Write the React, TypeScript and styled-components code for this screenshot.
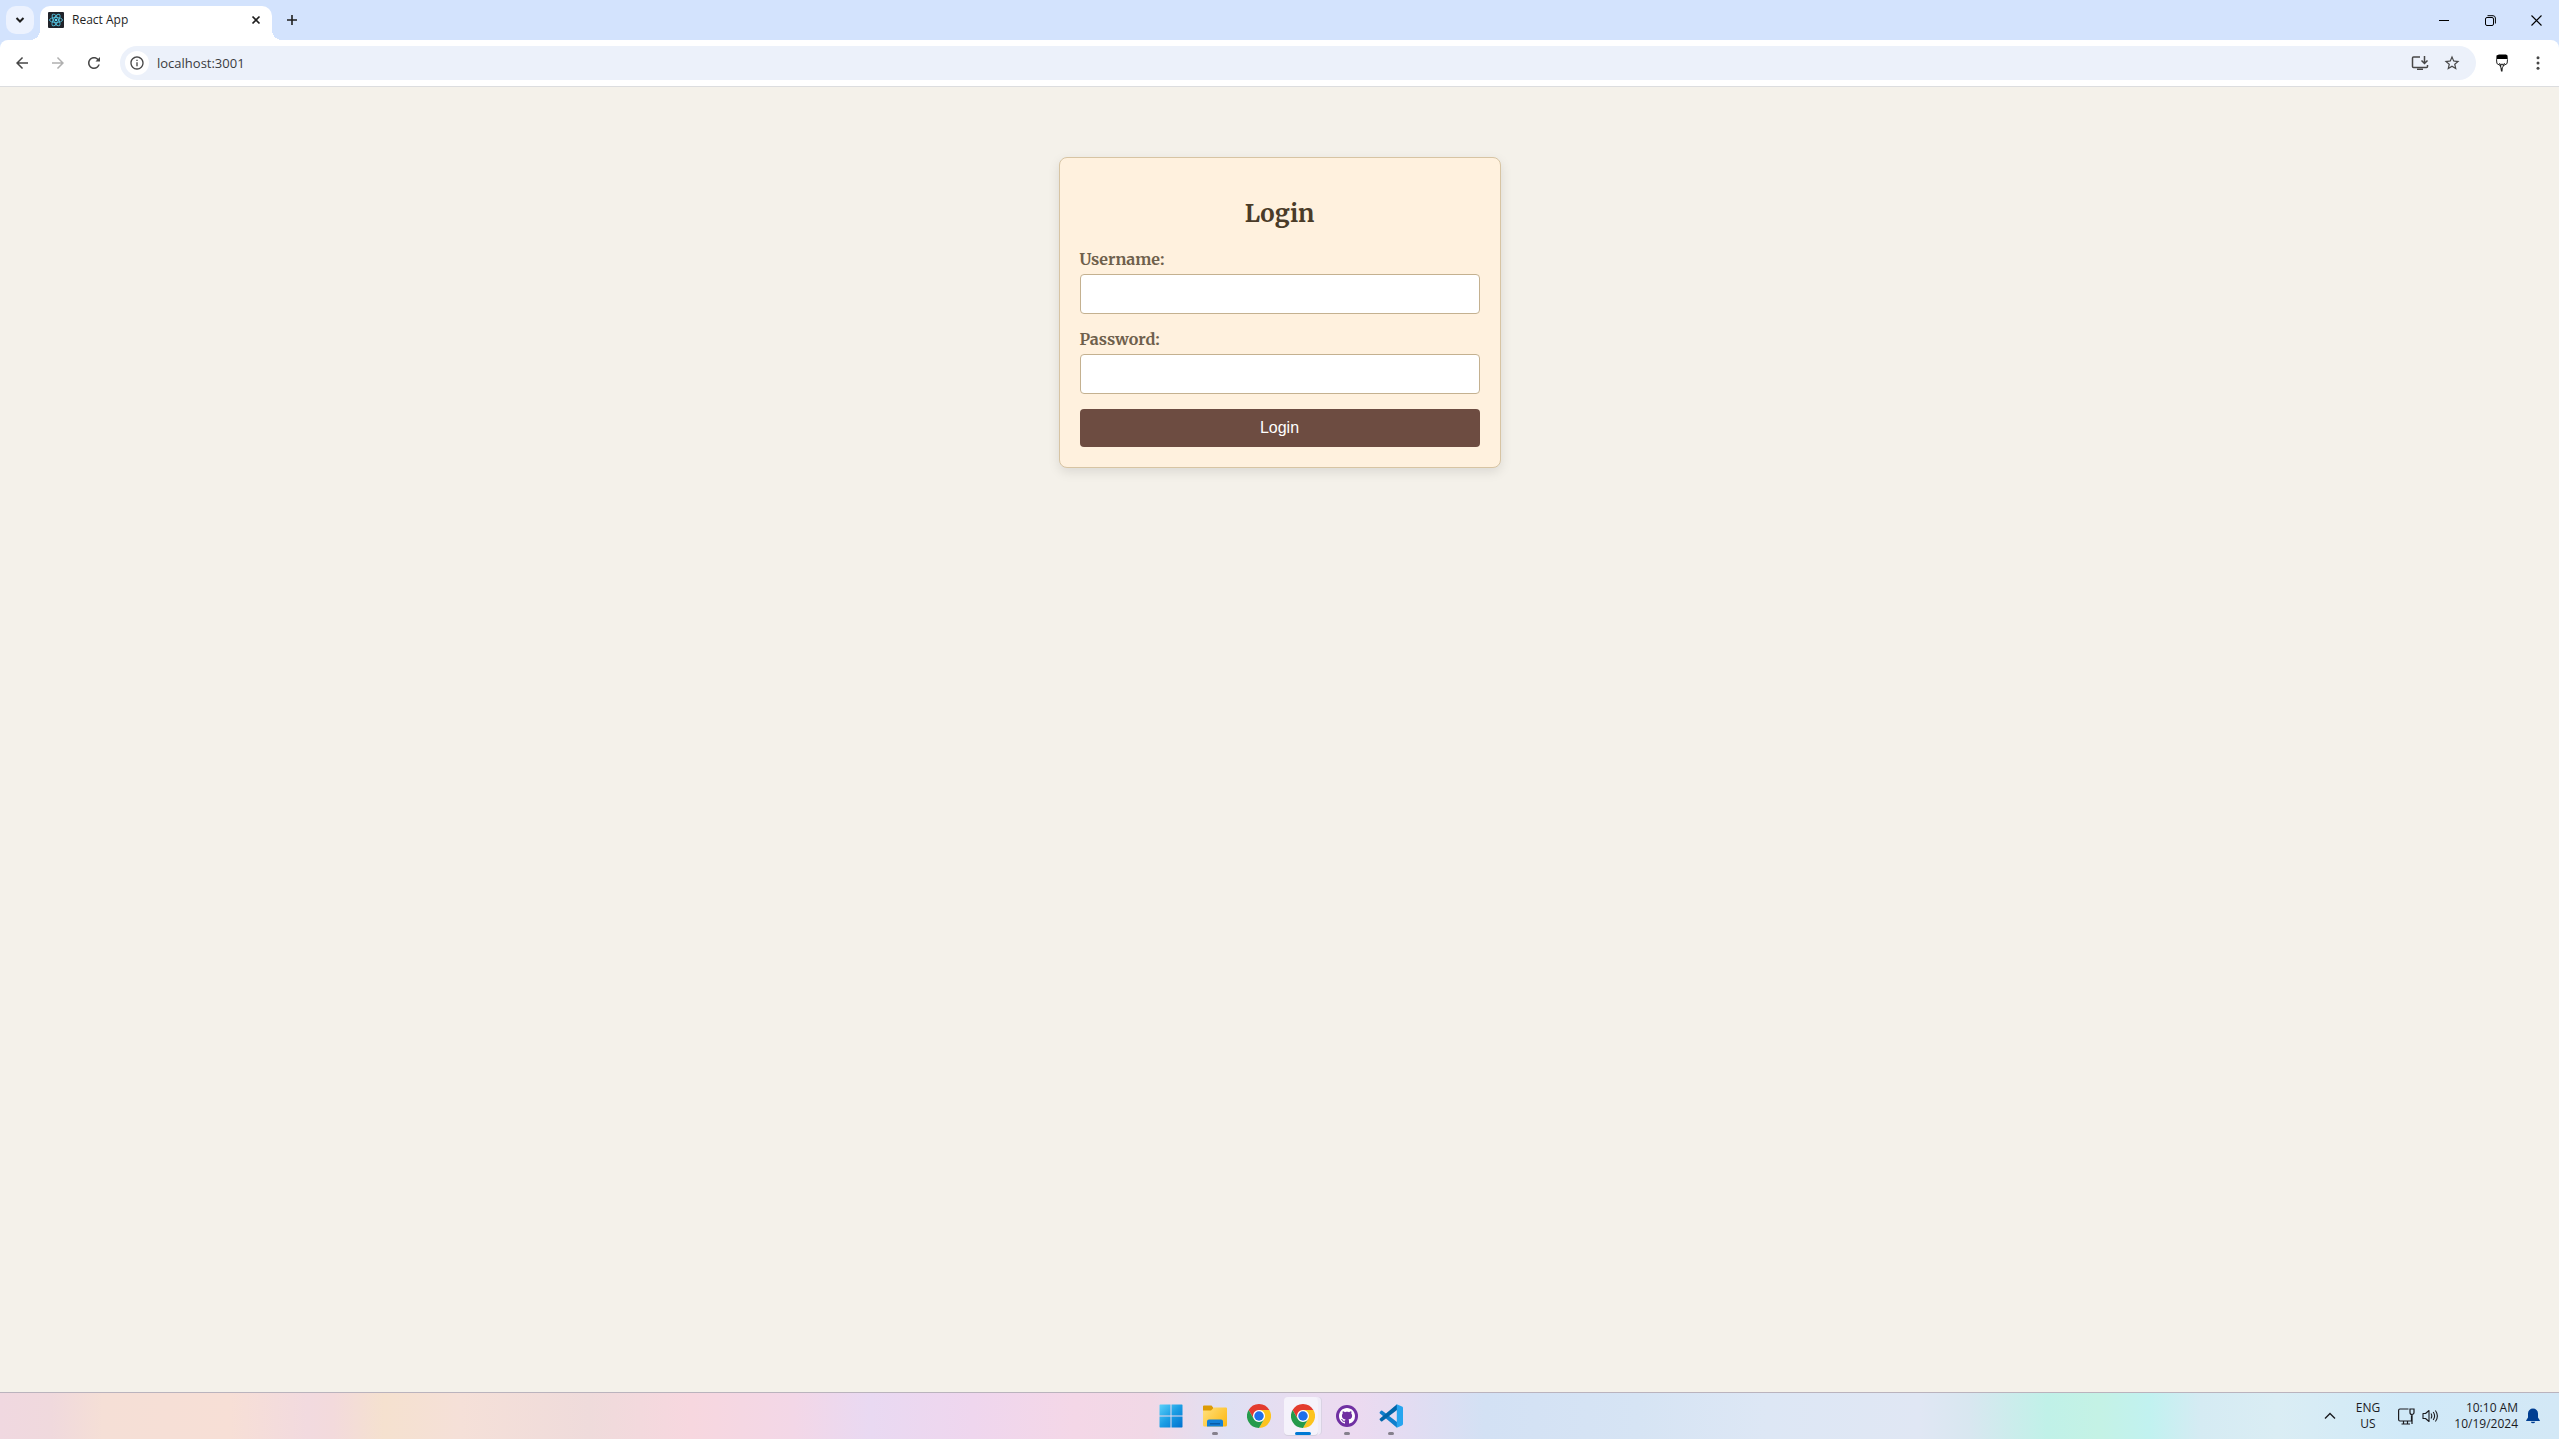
import React from "react";
import styled, { createGlobalStyle, css } from "styled-components";

const GlobalStyle = createGlobalStyle`
  *, *::before, *::after { box-sizing: border-box; }
  body { margin: 0; background: #f4f1ea; }
  button { margin: 0; padding: 0; border: 0; background: none; color: inherit; font: inherit; }
  svg { display: block; }
`;

const uiFont = `"Segoe UI", "Open Sans", "Noto Sans", sans-serif`;
const bookFont = `Merriweather, "DejaVu Serif Condensed", "DejaVu Serif", serif`;

const Screen = styled.div`
  display: flex;
  flex-direction: column;
  min-height: 100vh;
  font-family: ${uiFont};
  color: #1f1f1f;
`;

/* ---------- browser chrome ---------- */

const TabStrip = styled.header`
  display: flex;
  align-items: center;
  height: 40px;
  padding-left: 6px;
  background: #d3e3fd;
`;

const TabSearch = styled.button`
  display: grid;
  place-items: center;
  width: 28px;
  height: 28px;
  border-radius: 10px;
  background: #ecf2fe;
`;

const Tab = styled.div`
  position: relative;
  display: flex;
  align-items: center;
  align-self: flex-end;
  width: 232px;
  height: 34px;
  margin-left: 6px;
  padding: 0 8px 6px;
  border-radius: 10px 10px 0 0;
  background: #fff;
  font-size: 12px;
  line-height: 16px;

  &::before,
  &::after {
    content: "";
    position: absolute;
    bottom: 0;
    width: 10px;
    height: 10px;
  }
  &::before {
    right: 100%;
    background: radial-gradient(circle at 0 0, transparent 10px, #fff 10px);
  }
  &::after {
    left: 100%;
    background: radial-gradient(circle at 100% 0, transparent 10px, #fff 10px);
  }
`;

const TabTitle = styled.span`
  flex: 1;
  padding-left: 8px;
`;

const SquareButton = styled.button<{ $size: number }>`
  display: grid;
  place-items: center;
  flex: none;
  width: ${(p) => p.$size}px;
  height: ${(p) => p.$size}px;
`;

const NewTab = styled(SquareButton)`
  margin-left: 6px;
`;

const WindowControls = styled.div`
  display: flex;
  height: 100%;
  margin-left: auto;
`;

const WindowButton = styled.button`
  display: grid;
  place-items: center;
  width: 46px;
  color: #000;
`;

const ToolbarBack = styled.div`
  background: #d3e3fd;
`;

const Toolbar = styled.nav`
  display: flex;
  align-items: center;
  gap: 8px;
  height: 47px;
  padding: 0 7px 0 8px;
  border-bottom: 1px solid #dcdddf;
  border-radius: 8px 8px 0 0;
  background: #fff;
  color: #474747;
`;

const AddressBar = styled.div`
  display: flex;
  align-items: center;
  gap: 4px;
  flex: 1;
  height: 34px;
  margin: 0 4px;
  padding: 0 10px 0 5px;
  border-radius: 17px;
  background: #ecf1fa;
`;

const SiteInfo = styled(SquareButton)`
  border-radius: 50%;
  background: #fff;
`;

const UrlInput = styled.input`
  flex: 1;
  min-width: 0;
  margin-left: 4px;
  padding: 0;
  border: 0;
  outline: 0;
  background: none;
  color: #3a3b40;
  font: 13px/20px ${uiFont};
`;

/* ---------- page ---------- */

const Page = styled.main`
  flex: 1;
  padding-top: 70px;
  background: #f4f1ea;
`;

const LoginCard = styled.section`
  width: 442px;
  margin: 0 auto;
  padding: 20px;
  border: 1px solid #d7c4a3;
  border-radius: 8px;
  background: #fff1de;
  box-shadow: 0 4px 12px rgba(0, 0, 0, 0.1);
  font-family: ${bookFont};
`;

const Title = styled.h2`
  margin: 20px 0;
  color: #4a3b28;
  font-size: 24px;
  line-height: 31px;
  text-align: center;
`;

const Field = styled.div`
  margin-bottom: 15px;
`;

const Label = styled.label`
  display: block;
  margin-bottom: 5px;
  color: #6e604c;
  font-size: 16px;
  font-weight: 700;
  line-height: 20px;
`;

const TextInput = styled.input`
  display: block;
  width: 100%;
  padding: 10px;
  border: 1px solid #c4b190;
  border-radius: 4px;
  background: #fff;
  font: 16px/18px "Liberation Sans", Arial, sans-serif;
`;

const Submit = styled.button`
  display: block;
  width: 100%;
  padding: 10px;
  border-radius: 4px;
  background: #6d4c41;
  color: #fff;
  font: 16px/18px "Liberation Sans", Arial, sans-serif;
`;

/* ---------- taskbar ---------- */

const Taskbar = styled.footer`
  display: grid;
  grid-template-columns: 1fr auto 1fr;
  align-items: stretch;
  height: 47px;
  border-top: 1px solid #bab3bd;
  background: linear-gradient(
    90deg,
    #f0d8e0 0%,
    #f0d9dd 2%,
    #f5dfd6 4%,
    #f7dfd6 9%,
    #f2dadf 12%,
    #f3dadc 13%,
    #f5e1cf 15%,
    #f5e0d8 18%,
    #efdbdb 23%,
    #f7d7df 27%,
    #f3d7e7 31%,
    #e9d9f2 34%,
    #efd6ee 38%,
    #f4d7e7 42%,
    #f1d8e6 45%,
    #dfe0f3 48%,
    #e9dcf0 51%,
    #ecdaf0 53%,
    #e3dcf2 55%,
    #d3e1f4 58%,
    #d6e4f4 64%,
    #dde7f5 69%,
    #e0e7f4 75%,
    #d8e7f0 77%,
    #c0f1e8 80%,
    #c4f2e5 82%,
    #c1f2f0 84%,
    #d5ebf3 86%,
    #daedf4 89%,
    #d0e9f8 94%,
    #d3e8f6 100%
  );
`;

const Apps = styled.div`
  display: flex;
  grid-column: 2;
  padding-left: 2px;
`;

const AppButton = styled.button<{ $state?: "running" | "active" }>`
  position: relative;
  display: grid;
  place-items: center;
  width: 44px;

  & > svg { position: relative; }

  ${(p) =>
    p.$state &&
    css`
      &::after {
        content: "";
        position: absolute;
        bottom: 4px;
        left: 50%;
        width: ${p.$state === "active" ? 16 : 6}px;
        height: 3px;
        border-radius: 2px;
        background: ${p.$state === "active" ? "#0078d4" : "#85808c"};
        transform: translateX(-50%);
      }
    `}

  ${(p) =>
    p.$state === "active" &&
    css`
      &::before {
        content: "";
        position: absolute;
        top: 4px;
        left: 3px;
        width: 34px;
        height: 38px;
        border-radius: 4px;
        background: #f5f2fb;
        box-shadow: 0 1px 0 #d5d0df, 3px 0 0 #f0ebf8, 4px 0 0 #d9d3e3;
      }
    `}
`;

const Tray = styled.div`
  display: flex;
  align-items: center;
  justify-self: end;
  padding-right: 11px;
  color: #1b1b1f;
  font-size: 12px;
  line-height: 16px;
`;

const TrayButton = styled.button<{ $width: number; $align?: string }>`
  display: flex;
  flex-direction: ${(p) => (p.$align ? "column" : "row")};
  align-items: ${(p) => p.$align ?? "center"};
  justify-content: center;
  gap: ${(p) => (p.$align ? 0 : 7)}px;
  width: ${(p) => p.$width}px;
  white-space: nowrap;
`;

/* ---------- drawings ---------- */

const Material = ({ d, size = 20, color = "currentColor" }: { d: string; size?: number; color?: string }) => (
  <svg width={size} height={size} viewBox="0 0 24 24" fill={color} aria-hidden="true">
    <path d={d} />
  </svg>
);

const arrowBack = "M20 11H7.83l5.59-5.59L12 4l-8 8 8 8 1.41-1.41L7.83 13H20v-2z";
const arrowForward = "M12 4l-1.41 1.41L16.17 11H4v2h12.17l-5.58 5.59L12 20l8-8z";
const reload =
  "M17.65 6.35C16.2 4.9 14.21 4 12 4c-4.42 0-7.99 3.58-7.99 8s3.57 8 7.99 8c3.73 0 6.84-2.55 7.73-6h-2.08c-.82 2.33-3.04 4-5.65 4-3.31 0-6-2.69-6-6s2.69-6 6-6c1.66 0 3.14.69 4.22 1.78L14 10h6V4l-2.35 2.35z";
const info =
  "M11 7h2v2h-2zm0 4h2v6h-2zm1-9C6.48 2 2 6.48 2 12s4.48 10 10 10 10-4.48 10-10S17.52 2 12 2zm0 18c-4.41 0-8-3.59-8-8s3.59-8 8-8 8 3.59 8 8-3.59 8-8 8z";
const star =
  "M22 9.24l-7.19-.62L12 2 9.19 8.63 2 9.24l5.46 4.73L5.82 21 12 17.27 18.18 21l-1.63-7.03L22 9.24zM12 15.4l-3.76 2.27 1-4.28-3.32-2.88 4.38-.38L12 6.1l1.71 4.04 4.38.38-3.32 2.88 1 4.28L12 15.4z";
const octocat =
  "M8 0C3.58 0 0 3.58 0 8c0 3.54 2.29 6.53 5.47 7.59.4.07.55-.17.55-.38 0-.19-.01-.82-.01-1.49-2.01.37-2.53-.49-2.69-.94-.09-.23-.48-.94-.82-1.13-.28-.15-.68-.52-.01-.53.63-.01 1.08.58 1.23.82.72 1.21 1.87.87 2.33.66.07-.52.28-.87.51-1.07-1.78-.2-3.64-.89-3.64-3.95 0-.87.31-1.59.82-2.15-.08-.2-.36-1.02.08-2.12 0 0 .67-.21 2.2.82.64-.18 1.32-.27 2-.27s1.36.09 2 .27c1.53-1.04 2.2-.82 2.2-.82.44 1.1.16 1.92.08 2.12.51.56.82 1.27.82 2.15 0 3.07-1.87 3.75-3.65 3.95.29.25.54.73.54 1.48 0 1.07-.01 1.93-.01 2.2 0 .21.15.46.55.38A8.01 8.01 0 0 0 16 8c0-4.42-3.58-8-8-8z";

const Favicon = () => (
  <svg width="16" height="16" viewBox="0 0 32 32" fill="none" stroke="#53c1de" strokeWidth="1.8" aria-hidden="true">
    <rect width="32" height="32" rx="2" fill="#20232a" stroke="none" />
    {[0, 60, 120].map((angle) => (
      <ellipse key={angle} cx="16" cy="16" rx="13" ry="5" transform={`rotate(${angle} 16 16)`} />
    ))}
    <circle cx="16" cy="16" r="2.6" fill="#61dafb" stroke="none" />
  </svg>
);

const InstallIcon = () => (
  <svg width="20" height="20" viewBox="0 0 20 20" fill="none" stroke="currentColor" strokeWidth="1.5" aria-hidden="true">
    <path d="M10 4H3.5a1 1 0 0 0-1 1v8.500a1 1 0 0 0 1 1h13a1 1 0 0 0 1-1V12" />
    <path d="M14.500 3v7M11.500 7.500l3 3 3-3" />
    <path d="M7 15.500h6v1.500H7z" fill="currentColor" stroke="none" />
  </svg>
);

const PortraitIcon = () => (
  <svg width="20" height="20" viewBox="0 0 20 20" aria-hidden="true">
    <path d="M4.500 2.500 7 1.500h7l1.500 1 .3 4-1.300-.6-9 .1L4.300 7z" fill="#000" />
    <path d="M4.500 6.500l.4 4 2.600 1.600M15.500 6.500l-.4 4-2.600 1.600M7 10.500l1.500.8h3l1.500-.8" fill="none" stroke="#222" />
    <path d="M7 11.500h6l-2.200 3-.3 4H9l-.6-4z" fill="#222" />
    <path d="M9 12.200h2.200l-1.600 3.300z" fill="#fff" />
  </svg>
);

const StartIcon = () => (
  <svg width="24" height="24" viewBox="0 0 24 24" aria-hidden="true">
    <defs>
      <linearGradient id="start" x1="0" y1="0" x2="24" y2="24" gradientUnits="userSpaceOnUse">
        <stop stopColor="#5fd3fb" />
        <stop offset=".5" stopColor="#1b9de4" />
        <stop offset="1" stopColor="#006fce" />
      </linearGradient>
    </defs>
    <path d="M1 .5h10.500V11.500H.5V1zM12.500.5h10.500l.5.5v10.500h-11zM.5 12.500h11v11H1l-.5-.5zM12.500 12.500h11V23l-.5.5H12.500z" fill="url(#start)" />
  </svg>
);

const FolderIcon = () => (
  <svg width="24" height="24" viewBox="0 0 24 24" aria-hidden="true">
    <defs>
      <linearGradient id="folder" x1="0" y1="3" x2="24" y2="22" gradientUnits="userSpaceOnUse">
        <stop stopColor="#ffe17e" />
        <stop offset="1" stopColor="#fdb813" />
      </linearGradient>
    </defs>
    <path d="M0 2.500A1 1 0 0 1 1 1.500h7.500l2 2.500v3H0z" fill="#dd9b05" />
    <path d="M0 6.500h8l3-3h12a1 1 0 0 1 1 1V21a1.500 1.500 0 0 1-1.500 1.500h-21A1.500 1.500 0 0 1 0 21z" fill="url(#folder)" />
    <path d="M4 22.500V17.500A2 2 0 0 1 6 15.500h12a2 2 0 0 1 2 2v5z" fill="#1180d8" />
    <path d="M7 19h10v1.500H7z" fill="#065ba6" />
  </svg>
);

const ChromeIcon = () => (
  <svg width="24" height="24" viewBox="0 0 48 48" aria-hidden="true">
    <circle cx="24" cy="24" r="14" fill="#fff" />
    {[
      ["#e33b2e", 0],
      ["#fcc31e", 120],
      ["#259b4b", 240],
    ].map(([fill, angle]) => (
      <path
        key={fill}
        fill={fill as string}
        transform={`rotate(${angle} 24 24)`}
        d="M24 12H44.785A24 24 0 0 0 3.215 12L13.608 30A12 12 0 0 1 24 12Z"
      />
    ))}
    <circle cx="24" cy="24" r="9.500" fill="#1f6feb" />
  </svg>
);

const GithubDesktopIcon = () => (
  <svg width="24" height="24" viewBox="0 0 24 24" aria-hidden="true">
    <circle cx="12" cy="12" r="11" fill="#7030a2" />
    <g transform="translate(4 4)">
      <path d={octocat} fill="#fff" />
    </g>
  </svg>
);

const CodeIcon = () => (
  <svg width="24" height="24" viewBox="0 0 24 24" aria-hidden="true">
    <path d="M.6 8.200 2 6.800a1 1 0 0 1 1.300 0L18 18v5.700L.7 9.300z" fill="#0f7fcd" />
    <path d="M.6 15.800 2 17.200a1 1 0 0 0 1.300 0L18 6V.3L.7 14.700z" fill="#0065a9" />
    <path d="M17.800.2 23 2.600a1.500 1.500 0 0 1 1 1.400v16a1.500 1.500 0 0 1-1 1.400l-5.200 2.400z" fill="#27a5ef" />
  </svg>
);

const NetworkIcon = () => (
  <svg width="17" height="17" viewBox="0 0 17 17" fill="none" stroke="currentColor" strokeWidth="1.2" aria-hidden="true">
    <path d="M10.500 1H2A1.500 1.500 0 0 0 .6 2.500v9A1.500 1.500 0 0 0 2 13h11.500V7.500M5.500 13v3M9.500 13v3M3.500 16H12" />
    <path d="M12 1h4v3.500a2 2 0 0 1-4 0zM14 6.500V16" />
  </svg>
);

const VolumeIcon = () => (
  <svg width="17" height="16" viewBox="0 0 17 16" fill="none" stroke="currentColor" strokeWidth="1.100" aria-hidden="true">
    <path d="M1 5.500h2.500L7 2.500v11l-3.500-3H1z" strokeLinejoin="round" />
    <path d="M9 5.500q1.600 2.500 0 5M11.200 4q2.800 4 0 8M13.400 2.500q4 5.500 0 11" />
  </svg>
);

const BellIcon = () => (
  <svg width="14" height="16" viewBox="0 0 14 16" fill="#003e92" aria-hidden="true">
    <path d="M7 .5a5 5 0 0 1 5 5v4l1.600 2.600a.5.5 0 0 1-.5.900H.9a.5.5 0 0 1-.5-.9L2 9.500v-4a5 5 0 0 1 5-5zM4.800 13.700h4.400a2.300 2.300 0 0 1-4.400 0z" />
  </svg>
);

const Stroke = ({ d, size, width = 1 }: { d: string; size: number; width?: number }) => (
  <svg width={size} height={size} viewBox={`0 0 ${size} ${size}`} fill="none" stroke="currentColor" strokeWidth={width} aria-hidden="true">
    <path d={d} />
  </svg>
);

export default function App() {
  return (
    <Screen>
      <GlobalStyle />
      <TabStrip>
        <TabSearch aria-label="Search tabs">
          <Stroke size={10} width={2} d="M1.500 3 5 6.500 8.500 3" />
        </TabSearch>
        <Tab>
          <Favicon />
          <TabTitle>React App</TabTitle>
          <SquareButton $size={16} aria-label="Close tab">
            <Stroke size={10} width={1.700} d="M1.500 1.500l7 7M8.500 1.500l-7 7" />
          </SquareButton>
        </Tab>
        <NewTab $size={28} aria-label="New tab">
          <Stroke size={10} width={1.600} d="M5 0v10M0 5h10" />
        </NewTab>
        <WindowControls>
          <WindowButton aria-label="Minimize">
            <Stroke size={11} d="M0 5.500h10" />
          </WindowButton>
          <WindowButton aria-label="Restore">
            <Stroke size={11} d="M2 2.500h5a1.500 1.500 0 0 1 1.500 1.500v5a1.500 1.500 0 0 1-1.500 1.500H2A1.500 1.500 0 0 1 .5 9V4A1.500 1.500 0 0 1 2 2.500zM2.500.7H8A2.500 2.500 0 0 1 10.400 3v5.500" />
          </WindowButton>
          <WindowButton aria-label="Close">
            <Stroke size={11} width={1.100} d="M.5.5l10 10M10.500.5l-10 10" />
          </WindowButton>
        </WindowControls>
      </TabStrip>
      <ToolbarBack>
        <Toolbar>
          <SquareButton $size={28} aria-label="Back">
            <Material d={arrowBack} size={18} />
          </SquareButton>
          <SquareButton $size={28} aria-label="Forward">
            <Material d={arrowForward} size={18} color="#b0b0b0" />
          </SquareButton>
          <SquareButton $size={28} aria-label="Reload">
            <Material d={reload} size={18} />
          </SquareButton>
          <AddressBar>
            <SiteInfo $size={24} aria-label="Site information">
              <Material d={info} size={16} />
            </SiteInfo>
            <UrlInput aria-label="Address" defaultValue="localhost:3001" />
            <SquareButton $size={28} aria-label="Install app">
              <InstallIcon />
            </SquareButton>
            <SquareButton $size={28} aria-label="Bookmark this tab">
              <Material d={star} size={18} />
            </SquareButton>
          </AddressBar>
          <SquareButton $size={28} aria-label="Extension">
            <PortraitIcon />
          </SquareButton>
          <SquareButton $size={28} aria-label="Menu">
            <svg width="16" height="16" viewBox="0 0 16 16" fill="currentColor" aria-hidden="true">
              <circle cx="8" cy="2.700" r="1.500" />
              <circle cx="8" cy="8" r="1.500" />
              <circle cx="8" cy="13.300" r="1.500" />
            </svg>
          </SquareButton>
        </Toolbar>
      </ToolbarBack>

      <Page>
        <LoginCard>
          <Title>Login</Title>
          <form onSubmit={(e) => e.preventDefault()}>
            <Field>
              <Label htmlFor="username">Username:</Label>
              <TextInput id="username" type="text" />
            </Field>
            <Field>
              <Label htmlFor="password">Password:</Label>
              <TextInput id="password" type="password" />
            </Field>
            <Submit type="submit">Login</Submit>
          </form>
        </LoginCard>
      </Page>

      <Taskbar>
        <Apps>
          <AppButton aria-label="Start">
            <StartIcon />
          </AppButton>
          <AppButton $state="running" aria-label="File Explorer">
            <FolderIcon />
          </AppButton>
          <AppButton aria-label="Chrome">
            <ChromeIcon />
          </AppButton>
          <AppButton $state="active" aria-label="Chrome window">
            <ChromeIcon />
          </AppButton>
          <AppButton $state="running" aria-label="GitHub Desktop">
            <GithubDesktopIcon />
          </AppButton>
          <AppButton $state="running" aria-label="Visual Studio Code">
            <CodeIcon />
          </AppButton>
        </Apps>
        <Tray>
          <TrayButton $width={32} aria-label="Show hidden icons">
            <Stroke size={12} width={1.400} d="M1 8.500l5-5 5 5" />
          </TrayButton>
          <TrayButton $width={44} $align="center">
            <span>ENG</span>
            <span>US</span>
          </TrayButton>
          <TrayButton $width={56} aria-label="Network and volume">
            <NetworkIcon />
            <VolumeIcon />
          </TrayButton>
          <TrayButton $width={72} $align="flex-end">
            <span>10:10 AM</span>
            <span>10/19/2024</span>
          </TrayButton>
          <TrayButton $width={30} aria-label="Notifications">
            <BellIcon />
          </TrayButton>
        </Tray>
      </Taskbar>
    </Screen>
  );
}
